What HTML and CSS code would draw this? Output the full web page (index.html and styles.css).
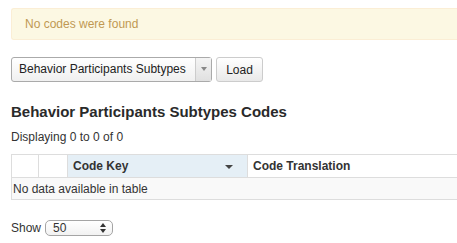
FILE: index.html
```html
<!DOCTYPE html>
<html>
<head>
  <meta charset="utf-8">
  <title>Codes</title>
  <link rel="stylesheet" href="styles.css">
</head>
<body>
  <div class="page">
    <div class="alert">No codes were found</div>

    <div class="picker">
      <div class="combo">
        <span class="combo-text">Behavior Participants Subtypes</span>
        <span class="combo-btn"><span class="tri"></span></span>
      </div>
      <button class="load">Load</button>
    </div>

    <h2 class="title">Behavior Participants Subtypes Codes</h2>
    <div class="count">Displaying 0 to 0 of 0</div>

    <table class="codes">
      <thead>
        <tr>
          <th class="c1"></th>
          <th class="c2"></th>
          <th class="c3 sorted">Code Key <span class="caret"></span></th>
          <th class="c4">Code Translation</th>
        </tr>
      </thead>
      <tbody>
        <tr>
          <td colspan="4" class="empty">No data available in table</td>
        </tr>
      </tbody>
    </table>

    <div class="show">
      Show
      <div class="size">
        <span>50</span>
        <span class="spin"><span class="up"></span><span class="down"></span></span>
      </div>
    </div>
  </div>
</body>
</html>
```

FILE: styles.css
```css
body {
  margin: 0;
  padding: 0;
  background: #fff;
  font-family: "Liberation Sans", Arial, sans-serif;
  font-size: 12px;
  color: #333;
}

.page {
  padding: 8px 0 0 11px;
}

.alert {
  background: #fcf8e3;
  border: 1px solid #fbeed5;
  border-right: none;
  border-radius: 3px 0 0 3px;
  color: #c09853;
  height: 30px;
  line-height: 30px;
  padding-left: 13px;
  font-size: 12px;
}

.picker {
  display: flex;
  margin-top: 17px;
  height: 25px;
}

.combo {
  display: flex;
  width: 199px;
  border: 1px solid #aaa;
  border-radius: 3px;
  background: linear-gradient(#fff, #f0f0f0);
}

.combo-text {
  flex: 1;
  line-height: 23px;
  padding-left: 7px;
  color: #222;
  white-space: nowrap;
  overflow: hidden;
}

.combo-btn {
  width: 16px;
  border-left: 1px solid #ccc;
  background: linear-gradient(#f4f4f4, #e0e0e0);
  display: flex;
  justify-content: center;
  padding-top: 9px;
  box-sizing: border-box;
}

.tri {
  width: 0;
  height: 0;
  border-left: 3px solid transparent;
  border-right: 3px solid transparent;
  border-top: 4px solid #888;
}

.load {
  margin-left: 4px;
  width: 47px;
  height: 25px;
  font-family: "Liberation Sans", Arial, sans-serif;
  font-size: 12px;
  color: #222;
  border: 1px solid #ccc;
  border-radius: 3px;
  background: linear-gradient(#fff, #e9e9e9);
  padding: 0;
}

.title {
  margin: 21px 0 0 0;
  font-size: 15px;
  font-weight: bold;
  color: #2a2a2a;
  line-height: 18px;
}

.count {
  margin-top: 8px;
  line-height: 16px;
}

.codes {
  margin-top: 9px;
  width: 460px;
  border-collapse: collapse;
  border: 1px solid #ddd;
  border-right: none;
}

.codes th {
  height: 22px;
  padding: 0 5px;
  text-align: left;
  font-weight: bold;
  border-left: 1px solid #ddd;
  border-bottom: 1px solid #ddd;
}

.codes th.c1 { width: 16px; }
.codes th.c2 { width: 18px; }
.codes th.c3 { width: 169px; }

.sorted {
  background: #e5eff6;
  position: relative;
}

.caret {
  position: absolute;
  right: 14px;
  top: 10px;
  width: 0;
  height: 0;
  border-left: 4px solid transparent;
  border-right: 4px solid transparent;
  border-top: 4px solid #444;
}

.empty {
  background: #f9f9f9;
  height: 21px;
  padding: 0 1px;
}

.show {
  margin-top: 20px;
  display: flex;
  align-items: center;
  gap: 4px;
}

.size {
  display: flex;
  align-items: center;
  justify-content: space-between;
  width: 53px;
  height: 14px;
  border: 1px solid #a5a5a5;
  border-radius: 5px;
  background: linear-gradient(#fff, #f2f2f2);
  padding: 0 6px 0 7px;
}

.spin {
  display: flex;
  flex-direction: column;
  gap: 2px;
}

.up {
  border-left: 3px solid transparent;
  border-right: 3px solid transparent;
  border-bottom: 4px solid #333;
}

.down {
  border-left: 3px solid transparent;
  border-right: 3px solid transparent;
  border-top: 4px solid #333;
}
```
